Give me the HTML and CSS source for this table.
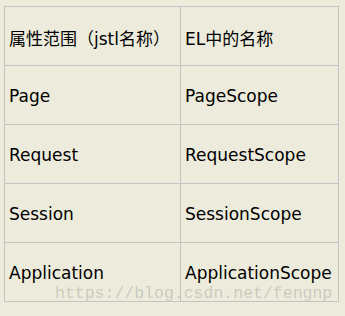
FILE: index.html
```html
<!DOCTYPE html>
<html lang="zh-CN">
  <head>
    <meta charset="UTF-8" />
    <title>EL 隐式对象</title>
    <link rel="stylesheet" href="styles.css">
  </head>
  <body>
    <div class="scope-wrap">
      <table class="scope-table">
        <tr>
          <td>属性范围（jstl名称）</td>
          <td>EL中的名称</td>
        </tr>
        <tr>
          <td>Page</td>
          <td>PageScope</td>
        </tr>
        <tr>
          <td>Request</td>
          <td>RequestScope</td>
        </tr>
        <tr>
          <td>Session</td>
          <td>SessionScope</td>
        </tr>
        <tr>
          <td>Application</td>
          <td>ApplicationScope</td>
        </tr>
      </table>
      <span class="watermark">https://blog.csdn.net/fengnp</span>
    </div>
  </body>
</html>
```

FILE: styles.css
```css
body {
  margin: 0;
  background-color: #edecdc;
  font-family: "DejaVu Sans", "Noto Sans CJK SC", sans-serif;
  font-size: 17px;
  color: #000;
}

.scope-wrap {
  position: relative;
  padding: 6px 0 0 4px;
}

.scope-table {
  border-collapse: collapse;
}

.scope-table td {
  border: 1px solid #c4c4c4;
  height: 59px;
  padding: 2px 4px 0;
  box-sizing: border-box;
  vertical-align: middle;
  white-space: nowrap;
}

.scope-table td:first-child {
  width: 176px;
}

.scope-table td:last-child {
  width: 158px;
}

/* site stamp over the last row */
.watermark {
  position: absolute;
  left: 55px;
  top: 284px;
  font-family: "Liberation Mono", monospace;
  font-size: 16.5px;
  color: rgba(160, 160, 150, 0.45);
  pointer-events: none;
}
```
